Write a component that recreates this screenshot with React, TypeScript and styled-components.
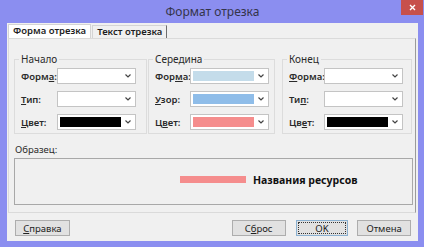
import styled, { createGlobalStyle } from "styled-components";

const GlobalStyle = createGlobalStyle`
  html, body {
    margin: 0;
    padding: 0;
    background: #8b8ef0;
  }
  * {
    box-sizing: border-box;
  }
`;

const StyledWindow = styled.div`
  width: 424px;
  height: 247px;
  background: #8b8ef0;
  display: flex;
  flex-direction: column;
  padding: 0 6px 6px 7px;
  font-family: "Noto Sans", "Open Sans", sans-serif;
  color: #1e1e1e;
`;

const StyledTitleBar = styled.div`
  height: 23px;
  flex: none;
  display: flex;
  align-items: center;
  justify-content: center;
  position: relative;
  font-size: 12px;
  font-weight: 400;
  color: #34344a;
  padding-bottom: 1px;
`;

const StyledClose = styled.div`
  position: absolute;
  top: 0;
  right: -5px;
  width: 22px;
  height: 15px;
  background: #c7504b;
  display: flex;
  align-items: center;
  justify-content: center;
`;

const StyledClient = styled.div`
  flex: 1;
  background: #f0f0f0;
  display: flex;
  flex-direction: column;
  padding: 1px 2px 0 1px;
`;

const StyledTabs = styled.div`
  display: flex;
  height: 14px;
  align-items: flex-end;
`;

const StyledTab = styled.div<{ $active?: boolean }>`
  height: ${(p) => (p.$active ? "14px" : "13px")};
  padding: 0 4px;
  font-size: 9.5px;
  font-weight: 600;
  line-height: 12px;
  background: ${(p) => (p.$active ? "#ffffff" : "#f0f0f0")};
  border: 1px solid #d4d4d4;
  border-bottom: none;
  border-right: ${(p) => (p.$active ? "1px solid #d4d4d4" : "1px solid #6e6e6e")};
  margin-right: 1px;
  white-space: nowrap;
`;

const StyledPanel = styled.div`
  height: 175px;
  border: 1px solid #dadada;
  border-right: 1px solid #9a9a9a;
  background: #f0f0f0;
  padding: 15px 0 0 5px;
`;

const StyledGroups = styled.div`
  display: flex;
  align-items: flex-start;
`;

const StyledGroup = styled.fieldset<{ $w: number; $ml: number }>`
  width: ${(p) => p.$w}px;
  margin: 0 0 0 ${(p) => p.$ml}px;
  padding: 4px 0 3px 0;
  border: 1px solid #dcdcdc;
  min-width: 0;
  display: flex;
  flex-direction: column;
  gap: 7px;
`;

const StyledLegend = styled.legend`
  font-size: 10px;
  padding: 0 2px;
  margin-left: 4px;
  line-height: 10px;
  color: #2a2a2a;
`;

const StyledRow = styled.div<{ $label: number }>`
  display: grid;
  grid-template-columns: ${(p) => p.$label}px 79px;
  align-items: center;
`;

const StyledLabel = styled.span`
  font-size: 9.5px;
  font-weight: 600;
  color: #2a2a2a;
  padding-left: 6px;
  white-space: nowrap;
`;

const StyledSelect = styled.div`
  height: 16px;
  background: #ffffff;
  border: 1px solid #c4c4c4;
  display: flex;
  align-items: center;
  padding: 2px 0 2px 2px;
`;

const StyledSwatch = styled.div<{ $color: string; $dotted?: boolean }>`
  width: 61px;
  height: 100%;
  background-color: ${(p) => p.$color};
  background-image: ${(p) =>
    p.$dotted
      ? "radial-gradient(circle, #a9c6d8 0.6px, transparent 0.7px)"
      : "none"};
  background-size: 2px 2px;
`;

const StyledChevron = styled.svg`
  margin-left: auto;
  margin-right: 4px;
  flex: none;
`;

const StyledSampleLabel = styled.div`
  font-size: 9.5px;
  color: #2a2a2a;
  margin: 10px 0 2px 1px;
  line-height: 12px;
`;

const StyledSample = styled.div`
  width: 399px;
  height: 47px;
  border: 1px solid #a8a8a8;
  display: flex;
  align-items: center;
  padding: 0 0 4px 165px;
`;

const StyledBar = styled.div`
  width: 66px;
  height: 7px;
  background: #f58d8d;
  margin-right: 7px;
`;

const StyledSampleText = styled.span`
  font-size: 10.5px;
  font-weight: 700;
  color: #111;
  white-space: nowrap;
`;

const StyledButtons = styled.div`
  display: flex;
  align-items: center;
  padding: 7px 5px 0 7px;
`;

const StyledButton = styled.div<{ $w: number; $ml?: number; $focus?: boolean }>`
  width: ${(p) => p.$w}px;
  height: 16px;
  margin-left: ${(p) => p.$ml ?? 0}px;
  background: #e1e1e1;
  border: 1px solid ${(p) => (p.$focus ? "#8ab0d0" : "#adadad")};
  outline: ${(p) => (p.$focus ? "1px dotted #333" : "none")};
  outline-offset: -3px;
  display: flex;
  align-items: center;
  justify-content: center;
  font-size: 9.5px;
  color: #222;
`;

function Chevron() {
  return (
    <StyledChevron width="6" height="4" viewBox="0 0 6 4">
      <path d="M0.5 0.5 L3 3 L5.5 0.5" stroke="#444" strokeWidth="1.2" fill="none" />
    </StyledChevron>
  );
}

type Field = { label: React.ReactNode; color?: string; dotted?: boolean };

function Select({ color, dotted }: { color?: string; dotted?: boolean }) {
  return (
    <StyledSelect>
      {color && <StyledSwatch $color={color} $dotted={dotted} />}
      <Chevron />
    </StyledSelect>
  );
}

function Group({
  title,
  w,
  ml,
  labelW,
  fields,
}: {
  title: string;
  w: number;
  ml: number;
  labelW: number;
  fields: Field[];
}) {
  return (
    <StyledGroup $w={w} $ml={ml}>
      <StyledLegend>{title}</StyledLegend>
      {fields.map((f, i) => (
        <StyledRow key={i} $label={labelW}>
          <StyledLabel>{f.label}</StyledLabel>
          <Select color={f.color} dotted={f.dotted} />
        </StyledRow>
      ))}
    </StyledGroup>
  );
}

function App() {
  return (
    <StyledWindow>
      <GlobalStyle />
      <StyledTitleBar>
        Формат отрезка
        <StyledClose>
          <svg width="7" height="7" viewBox="0 0 7 7">
            <path d="M1 1 L6 6 M6 1 L1 6" stroke="#fff" strokeWidth="1.4" />
          </svg>
        </StyledClose>
      </StyledTitleBar>
      <StyledClient>
        <StyledTabs>
          <StyledTab $active>Форма отрезка</StyledTab>
          <StyledTab>Текст отрезка</StyledTab>
        </StyledTabs>
        <StyledPanel>
          <StyledGroups>
            <Group
              title="Начало"
              w={133}
              ml={0}
              labelW={42}
              fields={[
                { label: <>Форм<u>а</u>:</> },
                { label: <><u>Т</u>ип:</> },
                { label: <><u>Ц</u>вет:</>, color: "#000000" },
              ]}
            />
            <Group
              title="Середина"
              w={127}
              ml={1}
              labelW={41}
              fields={[
                { label: <>Фор<u>м</u>а:</>, color: "#c4dcea", dotted: true },
                { label: <><u>У</u>зор:</>, color: "#8fbde9" },
                { label: <>Ц<u>в</u>ет:</>, color: "#f58d8d" },
              ]}
            />
            <Group
              title="Конец"
              w={130}
              ml={7}
              labelW={41}
              fields={[
                { label: <><u>Ф</u>орма:</> },
                { label: <>Ти<u>п</u>:</> },
                { label: <>Цв<u>е</u>т:</>, color: "#000000" },
              ]}
            />
          </StyledGroups>
          <StyledSampleLabel>Образец:</StyledSampleLabel>
          <StyledSample>
            <StyledBar />
            <StyledSampleText>Названия ресурсов</StyledSampleText>
          </StyledSample>
        </StyledPanel>
        <StyledButtons>
          <StyledButton $w={55}>
            <span><u>С</u>правка</span>
          </StyledButton>
          <StyledButton $w={54} $ml={162}>
            <span>С<u>б</u>рос</span>
          </StyledButton>
          <StyledButton $w={53} $ml={10} $focus>
            OK
          </StyledButton>
          <StyledButton $w={54} $ml={9}>
            Отмена
          </StyledButton>
        </StyledButtons>
      </StyledClient>
    </StyledWindow>
  );
}

export default App;
